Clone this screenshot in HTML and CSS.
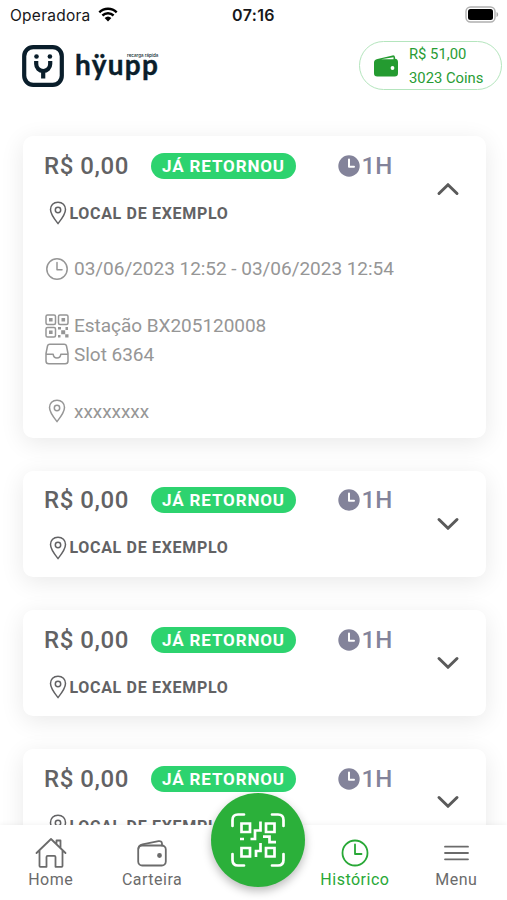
FILE: index.html
```html
<!DOCTYPE html>
<html lang="pt-BR">
<head>
<meta charset="utf-8">
<meta name="viewport" content="width=device-width, initial-scale=1">
<title>Histórico</title>
<link rel="stylesheet" href="styles.css">
</head>
<body>
<svg class="defs" width="0" height="0" aria-hidden="true">
  <symbol id="pin" viewBox="0 0 24 24"><path d="M12 1.200c-4.500 0-7.500 3.200-7.500 7.400 0 5 5.700 11.800 7.500 14 1.800-2.200 7.500-9 7.500-14 0-4.200-3-7.400-7.500-7.400Z"/><circle cx="12" cy="9" r="2.700"/></symbol>
  <symbol id="clock" viewBox="0 0 24 24"><circle cx="12" cy="12" r="10.200"/><path d="M12 5.500v7.300h5"/></symbol>
  <symbol id="clock-solid" viewBox="0 0 22 22"><circle cx="11" cy="11" r="10.700" fill="#83839a" stroke="none"/><path d="M11 4.500v7.200h5" stroke="#fff"/></symbol>
  <symbol id="chevron" viewBox="0 0 24 14"><path d="m3 2.500 9 8.800 9-8.800"/></symbol>
</svg>
<div class="app">
  <div class="status">
    <div class="carrier">Operadora
      <svg class="wifi" viewBox="0 0 20 15"><path d="M1.300 5.300a12.600 12.600 0 0 1 17.400 0M4.400 8.500a8.200 8.200 0 0 1 11.200 0"/><path class="solid" d="M6.600 11a5 5 0 0 1 6.800 0L10 14.500Z"/></svg>
    </div>
    <div class="time">07:16</div>
    <svg class="battery" viewBox="0 0 34 17"><rect class="shell" x="1" y="1" width="29" height="15" rx="4.500"/><rect x="3" y="3" width="25" height="11" rx="2.500"/><path class="cap" d="M31.500 6c2.200.8 2.200 4.200 0 5Z"/></svg>
  </div>

  <header class="header">
    <div class="brand">
      <svg class="mark" viewBox="0 0 42 42"><rect x="2.200" y="2.200" width="37.600" height="37.600" rx="9"/><path d="M14.200 16v3a7 7 0 0 0 14 0v-3M21.200 25v8.500"/><circle cx="14.500" cy="11.500" r="2.300"/><circle cx="27.900" cy="11.500" r="2.300"/></svg>
      <div class="wordmark">hÿupp<span class="tagline">recarga rápida</span></div>
    </div>
    <div class="balance">
      <svg class="wallet" viewBox="0 0 26 24"><path d="M4.500 5 19.500 1.400q2.300-.4 2.600 2v1.400q2.900.4 2.900 3.200v11.200q0 3.300-3.300 3.300H4.300Q1 22.500 1 19.200V8.500Q1 5.600 4.500 5Z"/><path class="slit" d="M8 5.300 20.500 3.200v2Z"/><circle class="slit" cx="19.500" cy="14" r="1.900"/></svg>
      <div><div>R$ 51,00</div><div>3023 Coins</div></div>
    </div>
  </header>

  <main class="list">
    <article class="card">
      <div class="summary">
        <div class="facts">
          <div class="price">R$ 0,00</div><div class="badge">JÁ RETORNOU</div>
          <div class="duration"><svg class="filled-clock"><use href="#clock-solid"/></svg>1H</div>
          <div class="place"><svg class="icon"><use href="#pin"/></svg>LOCAL DE EXEMPLO</div>
        </div>
        <svg class="chevron up"><use href="#chevron"/></svg>
      </div>
      <div class="details">
        <div class="line gap"><svg class="icon"><use href="#clock"/></svg>03/06/2023 12:52 - 03/06/2023 12:54</div>
        <div class="line"><svg class="icon" viewBox="0 0 24 24"><rect x="1" y="1" width="9.500" height="9.500" rx="1.500"/><rect x="13.500" y="1" width="9.500" height="9.500" rx="1.500"/><rect x="1" y="13.500" width="9.500" height="9.500" rx="1.500"/><path class="dots" d="M4 4h3.600v3.600H4zM16.500 4h3.600v3.600h-3.600zM4 16.500h3.600v3.600H4zM16.200 16.200h4v4h-4zM13 13h3v2.500h-3zM20.500 13H23v3h-2.500zM13 21h2.500v2.500H13zM20.200 20.200h3.300v3.300h-3.300z"/></svg>Estação BX205120008</div>
        <div class="line gap"><svg class="icon" viewBox="0 0 24 24"><path d="M4.800 2.200h14.400q1.900 0 2.300 1.800L23 11.500V19q0 2.800-2.800 2.800H3.800Q1 21.800 1 19v-7.500L2.500 4q.4-1.800 2.300-1.800ZM1 12.300h7.200q.4 3.600 3.800 3.600t3.800-3.600H23"/></svg>Slot 6364</div>
        <div class="line"><svg class="icon"><use href="#pin"/></svg>xxxxxxxx</div>
      </div>
    </article>

    <article class="card">
      <div class="summary">
        <div class="facts">
          <div class="price">R$ 0,00</div><div class="badge">JÁ RETORNOU</div>
          <div class="duration"><svg class="filled-clock"><use href="#clock-solid"/></svg>1H</div>
          <div class="place"><svg class="icon"><use href="#pin"/></svg>LOCAL DE EXEMPLO</div>
        </div>
        <svg class="chevron"><use href="#chevron"/></svg>
      </div>
    </article>

    <article class="card">
      <div class="summary">
        <div class="facts">
          <div class="price">R$ 0,00</div><div class="badge">JÁ RETORNOU</div>
          <div class="duration"><svg class="filled-clock"><use href="#clock-solid"/></svg>1H</div>
          <div class="place"><svg class="icon"><use href="#pin"/></svg>LOCAL DE EXEMPLO</div>
        </div>
        <svg class="chevron"><use href="#chevron"/></svg>
      </div>
    </article>

    <article class="card">
      <div class="summary">
        <div class="facts">
          <div class="price">R$ 0,00</div><div class="badge">JÁ RETORNOU</div>
          <div class="duration"><svg class="filled-clock"><use href="#clock-solid"/></svg>1H</div>
          <div class="place"><svg class="icon"><use href="#pin"/></svg>LOCAL DE EXEMPLO</div>
        </div>
        <svg class="chevron"><use href="#chevron"/></svg>
      </div>
    </article>
  </main>

  <nav class="tabs">
    <div class="tab"><svg viewBox="0 0 32 32"><path d="M1.500 16 16 2l14.500 14M4.500 13.500V29q0 .8.8.8h6.200V20q0-1.200 1.200-1.200h6.600q1.200 0 1.200 1.200v9.800h6.200q.8 0 .8-.8V13.500M21.500 7V3.500h4v7.300"/></svg>Home</div>
    <div class="tab"><svg viewBox="0 0 32 32"><rect x="2.200" y="8.500" width="27.600" height="20" rx="4"/><path d="M2.500 11.500q0-3.500 4-4.200L22.500 4.200q3.200-.5 3.500 2.300v2"/><circle class="dot" cx="23.500" cy="18.500" r="1.500"/></svg>Carteira</div>
    <div class="tab"></div>
    <div class="tab active"><svg viewBox="0 0 32 32"><circle cx="16" cy="16" r="12.500"/><path d="M16 7.500V17h6.500"/></svg>Histórico</div>
    <div class="tab"><svg viewBox="0 0 32 32"><path d="M5 9.700h23M5 16h23M5 22.300h23"/></svg>Menu</div>
    <div class="scan">
      <svg viewBox="0 0 54 54"><path d="M1.500 13V7q0-5.500 5.500-5.500h6M41 1.500h6q5.500 0 5.500 5.500v6M52.500 41v6q0 5.500-5.500 5.500h-6M13 52.500H7q-5.500 0-5.500-5.500v-6"/><path class="code" d="M10.500 10.500h8.500v8.500h-8.500zM35 10.500h8.500v8.500H35zM10.500 35h8.500v8.500h-8.500zM35 35h8.500v8.500H35zM9 26h4M29.500 8.500V17.500H24V26h-4.500M32 23.700h6.500v5.500H45M29.500 30v8H25v6"/></svg>
    </div>
  </nav>
</div>
</body>
</html>
```
FILE: styles.css
```css
* { box-sizing: border-box; }
body {
  margin: 0;
  background: #fff;
  color: #626264;
  font-family: Roboto, "Liberation Sans", sans-serif;
}
svg { flex: none; fill: none; stroke: currentColor; stroke-linecap: round; stroke-linejoin: round; }
.defs { position: absolute; }
.app { display: flex; flex-direction: column; width: 507px; height: 900px; overflow: hidden; }

.status {
  display: grid;
  grid-template-columns: 1fr auto 1fr;
  align-items: center;
  height: 30px;
  padding: 0 8px 0 10px;
  color: #17171a;
  font-family: Inter, sans-serif;
}
.carrier { display: flex; align-items: center; gap: 7px; font-size: 15.5px; letter-spacing: .25px; }
.wifi { width: 20px; height: 15px; margin-top: -2px; stroke: #000; stroke-width: 2.4; stroke-linecap: butt; }
.wifi .solid { fill: #000; stroke: none; }
.time { margin-right: 2px; font-size: 16px; font-weight: 600; letter-spacing: .4px; }
.battery { justify-self: end; width: 34px; height: 17px; margin-top: -2px; fill: #000; stroke: none; }
.battery .shell { fill: none; stroke: #b0b0b0; stroke-width: 1.4; }
.battery .cap { fill: #aaa; }

.header { display: flex; justify-content: space-between; height: 70px; padding: 11px 5.500px 0 22px; }
.brand { display: flex; align-items: flex-start; gap: 11px; padding-top: 4px; color: #0a1e2b; }
.mark { width: 42px; height: 42px; stroke-width: 4.2; stroke-linecap: butt; }
.mark circle { fill: currentColor; stroke: none; }
.wordmark {
  position: relative;
  height: 42px;
  font: 700 28px/39px Lato, sans-serif;
  letter-spacing: 1.3px;
  -webkit-text-stroke: .4px currentColor;
}
.tagline {
  position: absolute;
  top: 9px;
  right: 1px;
  font: 500 4.5px/4px Inter, sans-serif;
  letter-spacing: 0;
  white-space: nowrap;
  -webkit-text-stroke: 0;
}
.balance {
  display: flex;
  align-items: center;
  gap: 10.500px;
  width: 143px;
  height: 49px;
  padding-left: 13px;
  border: 1px solid #b4e5bd;
  border-radius: 25px;
  color: #289c34;
  font-size: 14.8px;
  line-height: 24px;
}
.wallet { width: 26px; height: 24px; fill: #249b30; stroke: none; }
.wallet .slit { fill: #fff; }

.list {
  display: flex;
  flex: 1;
  flex-direction: column;
  gap: 33px;
  min-height: 0;
  padding: 36px 21.5px 0 22.5px;
  overflow: hidden;
}
.card { flex: none; border-radius: 10px; background: #fff; box-shadow: 0 5px 24px rgba(0, 0, 0, .09); }
.summary { display: flex; align-items: center; justify-content: space-between; height: 106.2px; padding: 0 26px 0 21.5px; }
.facts {
  display: grid;
  grid-template-columns: 107px 186.5px auto;
  grid-template-rows: 28px 24px;
  row-gap: 21.5px;
  align-items: center;
  padding-bottom: 1.5px;
}
.price { font-size: 24px; font-weight: 500; letter-spacing: .55px; }
.badge {
  width: 145px;
  height: 26px;
  border-radius: 13px;
  background: #2dd36f;
  color: #fff;
  font-size: 17px;
  font-weight: 700;
  letter-spacing: .85px;
  line-height: 26px;
  text-align: center;
}
.duration { display: flex; align-items: center; gap: 2px; color: #83839a; font-size: 24px; font-weight: 500; }
.filled-clock { width: 22px; height: 22px; stroke-width: 2; }
.place { display: flex; grid-column: 1 / -1; align-items: center; padding-left: 1.5px; font-size: 16px; font-weight: 700; letter-spacing: .68px; }
.icon { width: 24px; height: 24px; stroke-width: 1.5; }
.chevron { width: 24px; height: 14px; stroke: #5a5a5a; stroke-width: 3; }
.chevron.up { transform: rotate(180deg); }
.details { padding: 12.3px 20px 12.3px 22.5px; color: #969696; font-size: 19px; letter-spacing: -.03px; }
.line { display: flex; align-items: center; gap: 5px; height: 28.5px; }
.line.gap { margin-bottom: 28.5px; }
.dots { fill: currentColor; stroke: none; }

.tabs {
  position: relative;
  display: grid;
  grid-template-columns: repeat(5, 1fr);
  height: 75px;
  background: #fff;
  box-shadow: 0 -1px 5px rgba(0, 0, 0, .05);
}
.tab {
  display: flex;
  flex-direction: column;
  align-items: center;
  padding-top: 12px;
  color: #6b6b6b;
  font-size: 16px;
  letter-spacing: .5px;
  line-height: 21px;
}
.tab svg { width: 32px; height: 32px; stroke-width: 1.8; }
.tab .dot { fill: currentColor; }
.tab.active { color: #28a836; }
.scan {
  position: absolute;
  top: -32px;
  left: 211px;
  display: grid;
  place-items: center;
  width: 94px;
  height: 94px;
  border-radius: 50%;
  background: #2bb03a;
  color: #fff;
  box-shadow: 0 4px 10px rgba(0, 0, 0, .27);
}
.scan svg { width: 54px; height: 54px; stroke-width: 2.7; }
.scan .code { stroke-linecap: butt; stroke-linejoin: miter; }
```
